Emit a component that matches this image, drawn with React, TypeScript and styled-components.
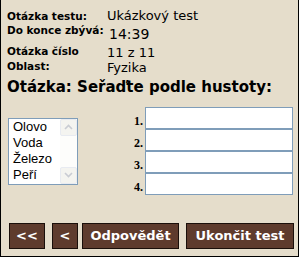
import React from "react";
import styled, { createGlobalStyle } from "styled-components";

const Global = createGlobalStyle`
  html, body { margin: 0; padding: 0; background: #ffffff; }
  body { width: 300px; height: 258px; overflow: hidden; }
`;

const Panel = styled.div`
  box-sizing: border-box;
  width: 299px;
  height: 257px;
  background: #e5ddcb;
  border: 1px solid #000;
  border-top: none;
  display: flex;
  flex-direction: column;
  color: #000;
`;

const Info = styled.div`
  display: flex;
  flex-direction: column;
  padding: 8px 0 0 6px;
`;

const InfoRow = styled.div<{ $h: number }>`
  display: grid;
  grid-template-columns: 100px 1fr;
  align-items: start;
  height: ${(p) => p.$h}px;
`;

const Label = styled.div<{ $offset: number }>`
  font: bold 10.5px/12px "DejaVu Sans", sans-serif;
  padding-top: ${(p) => p.$offset}px;
  white-space: nowrap;
`;

const Value = styled.div<{ $offset: number; $size?: number; $indent?: number }>`
  font: ${(p) => p.$size ?? 13}px/15px "DejaVu Sans", sans-serif;
  padding-top: ${(p) => p.$offset}px;
  padding-left: ${(p) => p.$indent ?? 0}px;
  white-space: nowrap;
`;

const Heading = styled.h1`
  margin: 4px 0 0 0;
  padding-left: 6px;
  font: bold 15px/18px "DejaVu Sans", sans-serif;
  white-space: nowrap;
`;

const AnswerRow = styled.div`
  display: flex;
  align-items: center;
  margin-top: 11px;
  padding: 0 5px 0 7px;
`;

const ListBox = styled.div`
  box-sizing: border-box;
  width: 70px;
  height: 67px;
  border: 1px solid #7f9db9;
  background: #fff;
  display: flex;
`;

const Items = styled.ul`
  list-style: none;
  margin: 0;
  padding: 0 0 0 4px;
  flex: 1;
  font: 13px/16px "Liberation Sans", Arial, sans-serif;
  overflow: hidden;
`;

const ScrollBar = styled.div`
  width: 17px;
  display: flex;
  flex-direction: column;
  justify-content: space-between;
  background: #fdfdfb;
`;

const ScrollButton = styled.div`
  box-sizing: border-box;
  width: 17px;
  height: 17px;
  border: 1px solid #e8ebf1;
  border-radius: 2px;
  background: #f4f4f0;
  display: flex;
  align-items: center;
  justify-content: center;
`;

const Fields = styled.div`
  margin-left: auto;
  display: grid;
  grid-template-columns: auto 148px;
  grid-auto-rows: 22px;
  column-gap: 2px;
`;

const Num = styled.span`
  align-self: end;
  justify-self: end;
  font: bold 12px/14px "Liberation Serif", "Times New Roman", serif;
  padding-bottom: 1px;
`;

const Field = styled.div`
  box-sizing: border-box;
  height: 22px;
  border: 1px solid #7f9db9;
  background: #fff;
`;

const ButtonBar = styled.div`
  display: flex;
  margin-top: auto;
  padding: 0 0 7px 8px;
`;

const Btn = styled.button<{ $w: number; $gap: number }>`
  box-sizing: border-box;
  width: ${(p) => p.$w}px;
  height: 26px;
  margin-left: ${(p) => p.$gap}px;
  padding: 0;
  background: #5e3b2d;
  color: #fff;
  border: 1px solid #1a0f0a;
  font: bold 13px/24px "DejaVu Sans", sans-serif;
  white-space: nowrap;
`;

const Chevron = ({ down }: { down?: boolean }) => (
  <svg width="9" height="6" viewBox="0 0 9 6">
    <path
      d={down ? "M1 1 L4.5 4.5 L8 1" : "M1 5 L4.5 1.5 L8 5"}
      fill="none"
      stroke="#c9ccd3"
      strokeWidth="1.6"
    />
  </svg>
);

export default function App() {
  return (
    <>
      <Global />
      <Panel>
        <Info>
          <InfoRow $h={15}>
            <Label $offset={2}>Otázka testu:</Label>
            <Value $offset={0}>Ukázkový test</Value>
          </InfoRow>
          <InfoRow $h={22}>
            <Label $offset={1}>Do konce zbývá:</Label>
            <Value $offset={4} $size={14} $indent={2}>14:39</Value>
          </InfoRow>
          <InfoRow $h={15}>
            <Label $offset={0}>Otázka číslo</Label>
            <Value $offset={0}>11 z 11</Value>
          </InfoRow>
          <InfoRow $h={14}>
            <Label $offset={0}>Oblast:</Label>
            <Value $offset={0}>Fyzika</Value>
          </InfoRow>
        </Info>
        <Heading>Otázka: Seřaďte podle hustoty:</Heading>
        <AnswerRow>
          <ListBox>
            <Items>
              <li>Olovo</li>
              <li>Voda</li>
              <li>Železo</li>
              <li>Peří</li>
            </Items>
            <ScrollBar>
              <ScrollButton>
                <Chevron />
              </ScrollButton>
              <ScrollButton>
                <Chevron down />
              </ScrollButton>
            </ScrollBar>
          </ListBox>
          <Fields>
            {[1, 2, 3, 4].map((n) => (
              <React.Fragment key={n}>
                <Num>{n}.</Num>
                <Field />
              </React.Fragment>
            ))}
          </Fields>
        </AnswerRow>
        <ButtonBar>
          <Btn $w={36} $gap={0}>&lt;&lt;</Btn>
          <Btn $w={26} $gap={7}>&lt;</Btn>
          <Btn $w={97} $gap={4}>Odpovědět</Btn>
          <Btn $w={108} $gap={7}>Ukončit test</Btn>
        </ButtonBar>
      </Panel>
    </>
  );
}
